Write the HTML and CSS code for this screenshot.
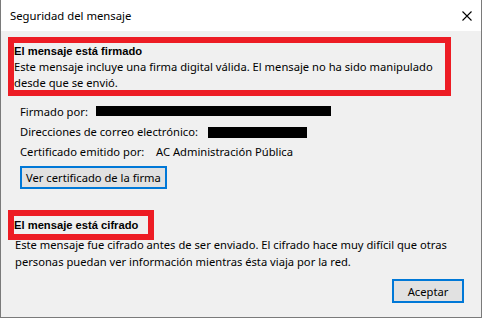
FILE: index.html
```html
<!DOCTYPE html>
<html lang="es">
<head>
<meta charset="utf-8">
<title>Seguridad del mensaje</title>
<link rel="stylesheet" href="styles.css">
</head>
<body>
<div class="window">
  <div class="titlebar">
    <span class="title">Seguridad del mensaje</span>
    <svg class="close" width="10" height="10" viewBox="0 0 10 10"><path d="M0.5 0.5 L9.5 9.5 M9.5 0.5 L0.5 9.5" stroke="#000" stroke-width="1.1" fill="none"/></svg>
  </div>
  <div class="content">
    <div class="box box-signed">
      <div class="heading">El mensaje está firmado</div>
      <div class="text">Este mensaje incluye una firma digital válida. El mensaje no ha sido manipulado<br>desde que se envió.</div>
    </div>
    <div class="info">
      <div class="row"><span class="label l1">Firmado por:</span><span class="redact r1"></span></div>
      <div class="row"><span class="label l2">Direcciones de correo electrónico:</span><span class="redact r2"></span></div>
      <div class="row"><span class="label l3">Certificado emitido por:</span><span class="value">AC Administración Pública</span></div>
    </div>
    <button class="btn btn-cert">Ver certificado de la firma</button>
    <div class="box box-cipher">
      <div class="heading">El mensaje está cifrado</div>
    </div>
    <div class="cipher-text">Este mensaje fue cifrado antes de ser enviado. El cifrado hace muy difícil que otras<br>personas puedan ver información mientras ésta viaja por la red.</div>
    <div class="footer">
      <button class="btn btn-ok">Aceptar</button>
    </div>
  </div>
</div>
</body>
</html>
```
FILE: styles.css
```css
* { box-sizing: border-box; }
html, body { margin: 0; padding: 0; background: #f0f0f0; }
body { font-family: "Noto Sans", "Open Sans", sans-serif; font-size: 11.2px; color: #000; white-space: nowrap; }
.window {
  width: 482px; height: 318px;
  border: 1px solid #7a7a7a; border-top: 0;
  background: #f0f0f0;
  display: flex; flex-direction: column;
}
.titlebar {
  height: 31px; background: #fff;
  display: flex; align-items: center; justify-content: space-between;
  padding: 0 9px 0 9px;
}
.title { font-size: 11.3px; }
.close { display: block; }
.content { display: flex; flex-direction: column; align-items: flex-start; }
.box { border: 6px solid #ed1c24; margin-left: 7px; }
.box-signed { margin-top: 6px; width: 443px; height: 59px; line-height: 16px; }
.heading { font-family: "Liberation Sans", Arial, sans-serif; font-weight: bold; font-size: 11.2px; }
.info { margin-top: 5px; padding-left: 19px; }
.row { height: 20px; display: flex; align-items: center; }
.label { display: inline-block; }
.l1 { width: 76px; }
.l2 { width: 188px; }
.l3 { width: 136px; }
.redact { display: inline-block; background: #000; }
.r1 { width: 235px; height: 10px; }
.r2 { width: 99px; height: 11px; margin-top: 2px; }
.btn {
  font-family: inherit; font-size: 11.2px; color: #000;
  background: #e1e1e1; border: 2px solid #0078d7; padding: 0; margin: 0;
}
.btn-cert { margin-top: 5px; margin-left: 19px; width: 147px; height: 23px; text-align: left; padding-left: 4px; }
.box-cipher { margin-top: 21px; width: 146px; height: 30px; line-height: 18px; position: relative; z-index: 1; }
.cipher-text { margin-top: -4px; padding-left: 14px; line-height: 17px; }
.footer { align-self: stretch; display: flex; justify-content: flex-end; padding-right: 17px; margin-top: 9px; }
.btn-ok { width: 72px; height: 24px; text-align: center; }
```
